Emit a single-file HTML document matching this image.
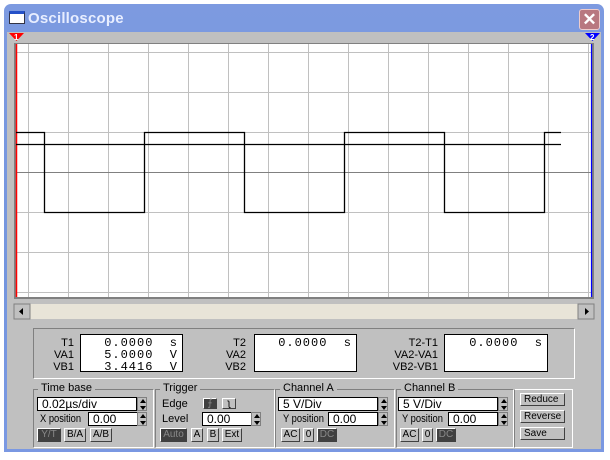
<!DOCTYPE html>
<html><head><meta charset="utf-8"><style>
*{margin:0;padding:0;box-sizing:border-box}
body{width:610px;height:460px;background:#fff;position:relative;overflow:hidden;font-family:"Liberation Sans",sans-serif;font-size:11px;color:#000}
.a{position:absolute}
.win{left:4px;top:4px;width:600px;height:448px;background:linear-gradient(#7d9ae0,#7495de 60%,#7a98e2);border-radius:7px 7px 0 0}
.inner{left:7px;top:32px;width:594px;height:417px;background:#c0c0c0}
.title{left:28px;top:10px;color:#e8eeff;font-size:15px;font-weight:bold;letter-spacing:0.2px}
.sunk{border:1px solid;border-color:#808080 #fff #fff #808080}
.box{background:#fff;border:1px solid #000;font-family:"Liberation Mono",monospace;font-size:12px;letter-spacing:1px}
.lbl{font-size:11px}
.nar{transform:scaleX(0.85);transform-origin:0 0}
.grp{border:1px solid;border-color:#808080 #fff #fff #808080}
.gt{background:#c0c0c0;padding:0 3px;font-size:11px;top:-8px;left:4px}
.btn{border:1px solid;border-color:#fff #404040 #404040 #fff;background:#c0c0c0;font-size:10px;text-align:center;line-height:12px;height:14px}
.dk{background:#404040;color:#888}
.spin{width:10px;height:14px;border:1px solid #808080;background:#c0c0c0}
.spin:before{content:"";position:absolute;left:2px;top:1px;border:3px solid transparent;border-bottom:4px solid #000;border-top:0}
.spin:after{content:"";position:absolute;left:2px;top:8px;border:3px solid transparent;border-top:4px solid #000;border-bottom:0}
.inp{background:#fff;border:1px solid #000;height:14px;font-size:12px;line-height:12px;padding-left:4px}
</style></head><body>
<div class="a win"></div>
<div class="a" style="left:9px;top:11px;width:16px;height:13px;background:#fff;border:1px solid #334;border-top:3px solid #2450c8"></div>
<div class="a title">Oscilloscope</div>
<div class="a" style="left:579px;top:9px;width:21px;height:21px;background:#b87880;border:1px solid #ecc;border-radius:3px;color:#fff;font-size:17px;line-height:19px;text-align:center;font-weight:bold">✕</div>
<div class="a inner"></div>
<svg class="a" style="left:0;top:0" width="610" height="320">
<rect x="14" y="43" width="580" height="256" fill="#808080"/>
<rect x="16" y="44" width="576" height="253" fill="#fff"/>
<g stroke="#c0c0c0" stroke-width="1">
<path d="M28.5 44V297M68.5 44V297M108.5 44V297M148.5 44V297M188.5 44V297M228.5 44V297M268.5 44V297M308.5 44V297M348.5 44V297M388.5 44V297M428.5 44V297M468.5 44V297M508.5 44V297M548.5 44V297M588.5 44V297"/>
<path d="M16 52.5H592M16 92.5H592M16 132.5H592M16 212.5H592M16 252.5H592M16 292.5H592"/>
</g>
<path d="M16 172.5H592" stroke="#808080"/>
<path d="M16.5 44V297" stroke="#f00" stroke-width="1.5"/>
<path d="M591.5 44V297" stroke="#00f" stroke-width="1.2"/>
<path d="M16 132.5H44.5V212.5H144.5V132.5H244.5V212.5H344.5V132.5H444.5V212.5H544.5V132.5H561" fill="none" stroke="#000" stroke-width="1.3"/>
<path d="M16 144.5H561" stroke="#000" stroke-width="1.3"/>
<path d="M9 33H24L16.5 41Z" fill="#f00"/><text x="14" y="40" fill="#fff" font-size="8" font-weight="bold" font-family="Liberation Sans">1</text>
<path d="M585 33H600L592.5 41Z" fill="#00f"/><text x="590" y="40" fill="#fff" font-size="8" font-weight="bold" font-family="Liberation Sans">2</text>
<rect x="14" y="304" width="580" height="15" fill="#e8e4d8"/>
<rect x="14" y="304" width="16" height="15" fill="#c0c0c0" stroke="#808080"/>
<path d="M19 311.5L23 308V315Z" fill="#000"/>
<rect x="578" y="304" width="16" height="15" fill="#c0c0c0" stroke="#808080"/>
<path d="M589 311.5L585 308V315Z" fill="#000"/>
</svg>
<div class="a sunk" style="left:33px;top:328px;width:542px;height:51px"></div>
<div class="a lbl" style="left:40px;top:337px;width:34px;text-align:right;line-height:12px">T1<br>VA1<br>VB1</div>
<div class="a box" style="left:80px;top:334px;width:103px;height:38px;line-height:12px;padding:2px 4px 0 0;white-space:pre;text-align:right">0.0000  s
5.0000  V
3.4416  V</div>
<div class="a lbl" style="left:210px;top:337px;width:36px;text-align:right;line-height:12px">T2<br>VA2<br>VB2</div>
<div class="a box" style="left:254px;top:334px;width:103px;height:38px;line-height:12px;padding:2px 4px 0 0;white-space:pre;text-align:right">0.0000  s</div>
<div class="a lbl" style="left:380px;top:337px;width:58px;text-align:right;line-height:12px">T2-T1<br>VA2-VA1<br>VB2-VB1</div>
<div class="a box" style="left:444px;top:334px;width:104px;height:38px;line-height:12px;padding:2px 4px 0 0;white-space:pre;text-align:right">0.0000  s</div>

<div class="a grp" style="left:33px;top:389px;width:121px;height:59px"><div class="a gt">Time base</div></div>
<div class="a inp" style="left:37px;top:397px;width:100px">0.02µs/div</div><div class="a spin" style="left:137px;top:397px"></div>
<div class="a lbl nar" style="left:40px;top:413px">X position</div>
<div class="a inp" style="left:88px;top:412px;width:50px">0.00</div><div class="a spin" style="left:137px;top:412px"></div>
<div class="a btn dk" style="left:37px;top:428px;width:24px">Y/T</div>
<div class="a btn" style="left:64px;top:428px;width:22px">B/A</div>
<div class="a btn" style="left:90px;top:428px;width:22px">A/B</div>

<div class="a grp" style="left:155px;top:389px;width:120px;height:59px"><div class="a gt">Trigger</div></div>
<div class="a lbl" style="left:162px;top:398px">Edge</div>
<div class="a btn dk" style="left:203px;top:398px;width:14px;height:11px;line-height:9px">⨍</div>
<div class="a btn" style="left:222px;top:398px;width:14px;height:11px;line-height:9px">ʅ</div>
<div class="a lbl" style="left:162px;top:413px">Level</div>
<div class="a inp" style="left:202px;top:412px;width:50px">0.00</div><div class="a spin" style="left:251px;top:412px"></div>
<div class="a btn dk" style="left:160px;top:428px;width:27px">Auto</div>
<div class="a btn" style="left:191px;top:428px;width:12px">A</div>
<div class="a btn" style="left:207px;top:428px;width:12px">B</div>
<div class="a btn" style="left:222px;top:428px;width:20px">Ext</div>

<div class="a grp" style="left:275px;top:389px;width:120px;height:59px"><div class="a gt">Channel A</div></div>
<div class="a inp" style="left:278px;top:397px;width:100px">5 V/Div</div><div class="a spin" style="left:378px;top:397px"></div>
<div class="a lbl nar" style="left:283px;top:413px">Y position</div>
<div class="a inp" style="left:328px;top:412px;width:50px">0.00</div><div class="a spin" style="left:378px;top:412px"></div>
<div class="a btn" style="left:281px;top:428px;width:19px">AC</div>
<div class="a btn" style="left:303px;top:428px;width:11px">0</div>
<div class="a btn dk" style="left:317px;top:428px;width:20px">DC</div>

<div class="a grp" style="left:396px;top:389px;width:118px;height:59px"><div class="a gt">Channel B</div></div>
<div class="a inp" style="left:398px;top:397px;width:100px">5 V/Div</div><div class="a spin" style="left:498px;top:397px"></div>
<div class="a lbl nar" style="left:402px;top:413px">Y position</div>
<div class="a inp" style="left:448px;top:412px;width:50px">0.00</div><div class="a spin" style="left:498px;top:412px"></div>
<div class="a btn" style="left:400px;top:428px;width:19px">AC</div>
<div class="a btn" style="left:422px;top:428px;width:11px">0</div>
<div class="a btn dk" style="left:436px;top:428px;width:20px">DC</div>

<div class="a grp" style="left:514px;top:389px;width:59px;height:59px;border-top:1px solid #fff"></div>
<div class="a btn" style="left:520px;top:393px;width:45px;height:13px;text-align:left;padding-left:3px">Reduce</div>
<div class="a btn" style="left:520px;top:410px;width:45px;height:13px;text-align:left;padding-left:3px">Reverse</div>
<div class="a btn" style="left:520px;top:427px;width:45px;height:13px;text-align:left;padding-left:3px">Save</div>
</body></html>
